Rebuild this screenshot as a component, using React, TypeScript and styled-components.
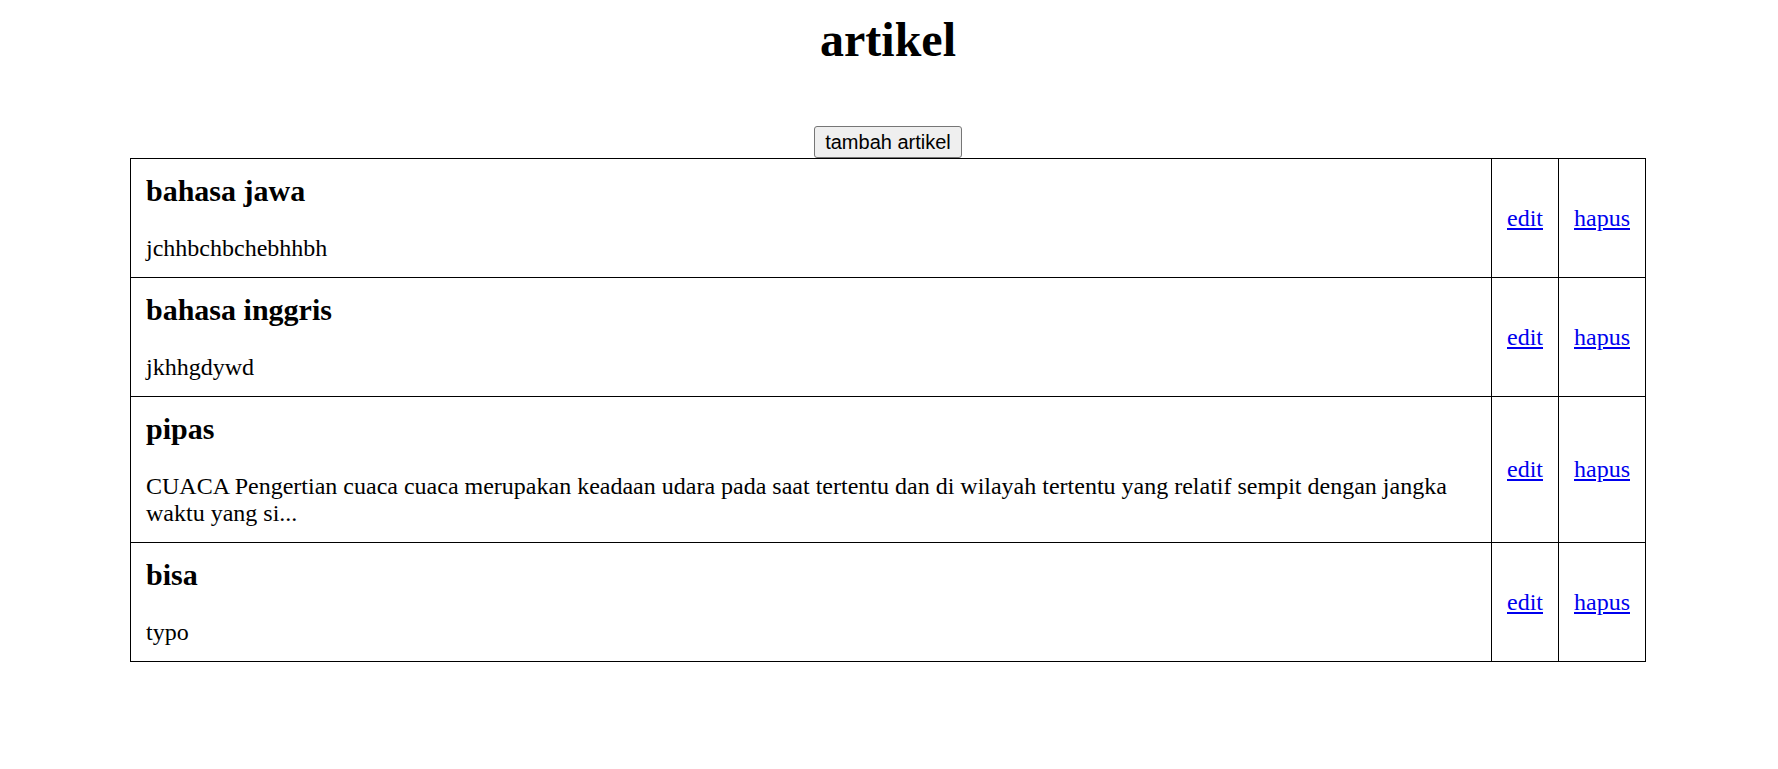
import styled, { createGlobalStyle } from 'styled-components';

interface Article {
  title: string;
  body: string;
}

const ARTICLES: Article[] = [
  { title: 'bahasa jawa', body: 'jchhbchbchebhhbh' },
  { title: 'bahasa inggris', body: 'jkhhgdywd' },
  {
    title: 'pipas',
    body: 'CUACA Pengertian cuaca cuaca merupakan keadaan udara pada saat tertentu dan di wilayah tertentu yang relatif sempit dengan jangka waktu yang si...',
  },
  { title: 'bisa', body: 'typo' },
];

function App() {
  return (
    <>
      <GlobalStyle />
      <Page>
        <Title>artikel</Title>
        <Toolbar>
          <AddButton>tambah artikel</AddButton>
        </Toolbar>
        <ArticleTable>
          <tbody>
            {ARTICLES.map((article) => (
              <tr key={article.title}>
                <Cell>
                  <ArticleTitle>{article.title}</ArticleTitle>
                  <ArticleBody>{article.body}</ArticleBody>
                </Cell>
                <Cell $action>
                  <ActionLink href="#">edit</ActionLink>
                </Cell>
                <Cell $action>
                  <ActionLink href="#">hapus</ActionLink>
                </Cell>
              </tr>
            ))}
          </tbody>
        </ArticleTable>
      </Page>
    </>
  );
}

const GlobalStyle = createGlobalStyle`
  body {
    margin: 0;
    background: #ffffff;
    font-family: "Liberation Serif", "Times New Roman", serif;
    color: #000000;
  }
`;

const Page = styled.div`
  padding: 12px 14px 12px 12px;
`;

const Title = styled.h1`
  margin: 0;
  font-size: 48px;
  line-height: 56px;
  font-weight: 700;
  text-align: center;
`;

const Toolbar = styled.div`
  display: flex;
  justify-content: center;
  margin-top: 58px;
`;

const AddButton = styled.button`
  height: 32px;
  padding: 0 10.5px;
  font-family: "Liberation Sans", Arial, sans-serif;
  font-size: 20px;
  color: #000000;
  background-color: #efefef;
  border: 1px solid #767676;
  border-radius: 3px;
`;

const ArticleTable = styled.table`
  width: 1516px;
  margin: 0 auto;
  border-collapse: collapse;
`;

const Cell = styled.td<{ $action?: boolean }>`
  border: 1px solid #000000;
  padding: 15px;
  vertical-align: middle;
  font-size: 24px;
  line-height: 27px;
  white-space: ${(props) => (props.$action ? 'nowrap' : 'normal')};
`;

const ArticleTitle = styled.h3`
  margin: 0 0 27px 0;
  font-size: 30px;
  line-height: 34px;
  font-weight: 700;
`;

const ArticleBody = styled.p`
  margin: 0;
  font-size: 24px;
  line-height: 27px;
`;

const ActionLink = styled.a`
  color: #0000ee;
  text-decoration: underline;
`;

export default App;
